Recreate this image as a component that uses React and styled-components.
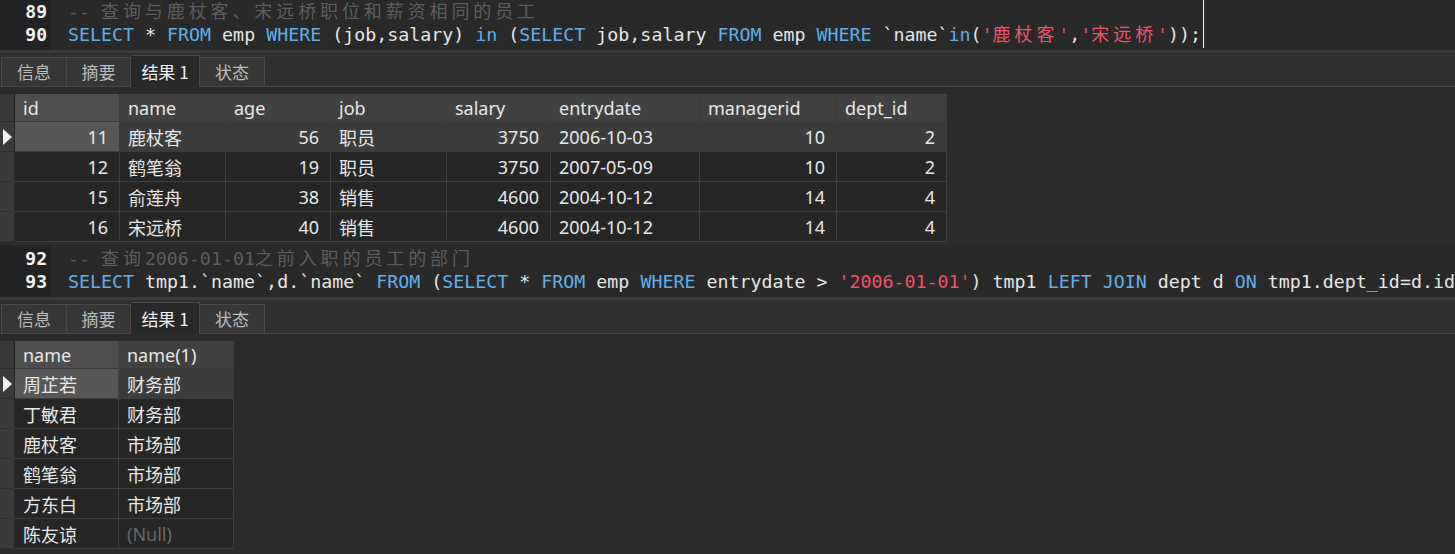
import React from "react";
import styled, { createGlobalStyle } from "styled-components";

const GlobalStyle = createGlobalStyle`
  html, body {
    margin: 0;
    padding: 0;
    background: #2b2b2b;
    overflow: hidden;
  }
`;

const Page = styled.div`
  width: 1455px;
  height: 554px;
  display: flex;
  flex-direction: column;
  background: #2b2b2b;
  overflow: hidden;
`;

const Editor = styled.div`
  position: relative;
  display: flex;
  height: ${(p) => p.$h}px;
  background: #292929;
  font-family: "DejaVu Sans Mono", "Liberation Mono", monospace;
  font-size: 18.3px;
  color: #e6e6e6;
`;

const Gutter = styled.div`
  width: 51px;
  box-sizing: border-box;
  padding: ${(p) => p.$top}px 4px 0 0;
  background: #232323;
  text-align: right;
  font-weight: bold;
  color: #f2f2f2;
  font-size: 18px;
`;

const Code = styled.div`
  flex: 1;
  padding: ${(p) => p.$top}px 0 0 17px;
  white-space: pre;
`;

const Line = styled.div`
  height: 23px;
  line-height: 23px;
`;

const Kw = styled.span`
  color: #5fb0ea;
`;

const Str = styled.span`
  color: #ee5468;
`;

const Cm = styled.span`
  color: #5e5e5e;
`;

const Cjk = styled.span`
  font-family: "Noto Sans CJK SC", sans-serif;
  font-size: 18px;
  line-height: 1;
  letter-spacing: 3.9px;
`;

const Caret = styled.div`
  position: absolute;
  left: 1203px;
  top: 0;
  width: 1px;
  height: 48px;
  background: #f4f4f4;
`;

const Splitter = styled.div`
  height: 3px;
  background: #3b3b3b;
`;

const TabBar = styled.div`
  height: 34px;
  box-sizing: border-box;
  display: flex;
  align-items: flex-end;
  padding-left: 1px;
  background: #303030;
  border-bottom: 1px solid #474747;
`;

const Tab = styled.div`
  width: ${(p) => p.$w}px;
  height: ${(p) => (p.$active ? 32 : 29)}px;
  box-sizing: border-box;
  margin-bottom: ${(p) => (p.$active ? -1 : 0)}px;
  display: flex;
  align-items: center;
  justify-content: center;
  border: 1px solid #4a4a4a;
  border-bottom: none;
  border-left: ${(p) => (p.$first ? "1px solid #4a4a4a" : "none")};
  background: ${(p) => (p.$active ? "#282828" : "#373737")};
  color: ${(p) => (p.$active ? "#f2f2f2" : "#bdbdbd")};
  font-family: "Noto Sans CJK SC", "Noto Sans", sans-serif;
  font-size: 17px;
  padding-bottom: 1px;
`;

const GridArea = styled.div`
  padding: 7px 0 ${(p) => p.$bottom}px;
  background: #2b2b2b;
`;

const Grid = styled.div`
  display: grid;
  grid-template-columns: ${(p) => p.$cols.map((c) => c + "px").join(" ")};
  grid-auto-rows: 30px;
  grid-template-rows: 28px;
  width: max-content;
  font-family: "Noto Sans", "Noto Sans CJK SC", sans-serif;
  font-size: 18px;
  color: #e8e8e8;
`;

const Cell = styled.div`
  box-sizing: border-box;
  display: flex;
  align-items: center;
  justify-content: ${(p) => (p.$num ? "flex-end" : "flex-start")};
  padding: ${(p) => (p.$num ? "0 11px 0 0" : "0 0 0 8px")};
  border-right: 1px solid #3d3d3d;
  border-bottom: 1px solid #3d3d3d;
  white-space: nowrap;
  overflow: hidden;
  background: ${(p) =>
    p.$hi ? (p.$head ? "#4e4e4e" : "#575757") : p.$head ? "#414141" : p.$sel ? "#3c3c3c" : "#262626"};
  color: ${(p) => (p.$null ? "#6a6a6a" : "#e8e8e8")};
`;

const Marker = styled.div`
  box-sizing: border-box;
  display: flex;
  align-items: center;
  padding-left: 3px;
  background: #3b3b3b;
  border-right: 1px solid #262626;
  border-bottom: 1px solid #303030;
`;

const Arrow = () => (
  <svg width="10" height="16" viewBox="0 0 10 16">
    <polygon points="0,0 9,8 0,16" fill="#f2f2f2" />
  </svg>
);

function Tabs() {
  return (
    <TabBar>
      <Tab $w={66} $first>信息</Tab>
      <Tab $w={64}>摘要</Tab>
      <Tab $w={69} $active>结果 1</Tab>
      <Tab $w={65}>状态</Tab>
    </TabBar>
  );
}

function ResultGrid({ cols, columns, rows, hiCol }) {
  return (
    <Grid $cols={[15, ...cols]}>
      <Marker />
      {columns.map((c, i) => (
        <Cell key={c.name} $head $hi={i === hiCol}>
          {c.name}
        </Cell>
      ))}
      {rows.map((r, ri) => (
        <React.Fragment key={ri}>
          <Marker>{ri === 0 && <Arrow />}</Marker>
          {r.map((v, ci) => (
            <Cell
              key={ci}
              $num={columns[ci].num}
              $sel={ri === 0}
              $hi={ri === 0 && ci === hiCol}
              $null={v === null}
            >
              {v === null ? "(Null)" : v}
            </Cell>
          ))}
        </React.Fragment>
      ))}
    </Grid>
  );
}

const empColumns = [
  { name: "id", num: true },
  { name: "name" },
  { name: "age", num: true },
  { name: "job" },
  { name: "salary", num: true },
  { name: "entrydate" },
  { name: "managerid", num: true },
  { name: "dept_id", num: true },
];

const empRows = [
  ["11", "鹿杖客", "56", "职员", "3750", "2006-10-03", "10", "2"],
  ["12", "鹤笔翁", "19", "职员", "3750", "2007-05-09", "10", "2"],
  ["15", "俞莲舟", "38", "销售", "4600", "2004-10-12", "14", "4"],
  ["16", "宋远桥", "40", "销售", "4600", "2004-10-12", "14", "4"],
];

const deptColumns = [{ name: "name" }, { name: "name(1)" }];

const deptRows = [
  ["周芷若", "财务部"],
  ["丁敏君", "财务部"],
  ["鹿杖客", "市场部"],
  ["鹤笔翁", "市场部"],
  ["方东白", "市场部"],
  ["陈友谅", null],
];

export default function App() {
  return (
    <Page>
      <GlobalStyle />
      <Editor $h={50}>
        <Gutter $top={0}>
          <Line>89</Line>
          <Line>90</Line>
        </Gutter>
        <Code $top={0}>
          <Line>
            <Cm>
              -- <Cjk>查询与鹿杖客、宋远桥职位和薪资相同的员工</Cjk>
            </Cm>
          </Line>
          <Line>
            <Kw>SELECT</Kw> * <Kw>FROM</Kw> emp <Kw>WHERE</Kw> (job,salary) <Kw>in</Kw> (
            <Kw>SELECT</Kw> job,salary <Kw>FROM</Kw> emp <Kw>WHERE</Kw> `name`<Kw>in</Kw>(
            <Str>
              '<Cjk>鹿杖客</Cjk>'
            </Str>
            ,
            <Str>
              '<Cjk>宋远桥</Cjk>'
            </Str>
            ));
          </Line>
        </Code>
        <Caret />
      </Editor>
      <Splitter />
      <Tabs />
      <GridArea $bottom={3}>
        <ResultGrid
          cols={[105, 106, 105, 116, 104, 149, 137, 110]}
          columns={empColumns}
          rows={empRows}
          hiCol={0}
        />
      </GridArea>
      <Editor $h={52}>
        <Gutter $top={2}>
          <Line>92</Line>
          <Line>93</Line>
        </Gutter>
        <Code $top={2}>
          <Line>
            <Cm>
              -- <Cjk>查询</Cjk>2006-01-01<Cjk>之前入职的员工的部门</Cjk>
            </Cm>
          </Line>
          <Line>
            <Kw>SELECT</Kw> tmp1.`name`,d.`name` <Kw>FROM</Kw> (<Kw>SELECT</Kw> * <Kw>FROM</Kw> emp{" "}
            <Kw>WHERE</Kw> entrydate &gt; <Str>'2006-01-01'</Str>) tmp1 <Kw>LEFT</Kw> <Kw>JOIN</Kw> dept d{" "}
            <Kw>ON</Kw> tmp1.dept_id=d.id
          </Line>
        </Code>
      </Editor>
      <Splitter />
      <Tabs />
      <GridArea $bottom={5}>
        <ResultGrid cols={[104, 115]} columns={deptColumns} rows={deptRows} hiCol={0} />
      </GridArea>
    </Page>
  );
}
